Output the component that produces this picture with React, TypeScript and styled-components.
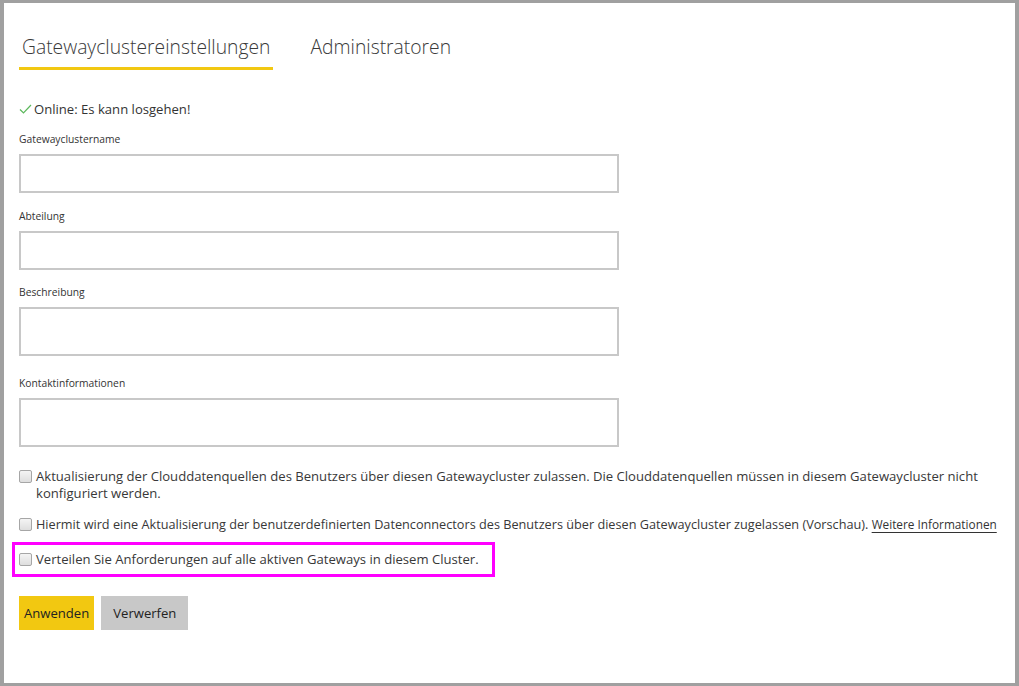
import React from 'react';
import styled, { createGlobalStyle } from 'styled-components';

const GlobalStyle = createGlobalStyle`
  html, body {
    margin: 0;
    padding: 0;
    background: #ffffff;
  }
  body {
    font-family: "Segoe UI", "Open Sans", "Liberation Sans", sans-serif;
    color: #333333;
  }
`;

const Frame = styled.div`
  box-sizing: border-box;
  width: 1019px;
  height: 686px;
  border-style: solid;
  border-color: #a0a0a0;
  border-width: 3px 4px 3px 4px;
  background: #fff;
  padding: 0 15px;
  overflow: hidden;
`;

const Tabs = styled.div`
  display: flex;
  gap: 34px;
  padding-top: 30px;
`;

const Tab = styled.div<{ $active?: boolean }>`
  font-family: "Open Sans", sans-serif;
  font-weight: 300;
  font-size: 19.3px;
  color: #3a3a3a;
  padding: 0 3px 7px 3px;
  border-bottom: 3px solid ${(p) => (p.$active ? '#f2c811' : 'transparent')};
`;

const Status = styled.div`
  display: flex;
  align-items: center;
  margin-top: 30px;
  font-size: 13.1px;
  color: #333;
  svg {
    margin-right: 2px;
  }
`;

const Field = styled.div<{ $gap?: number }>`
  display: flex;
  flex-direction: column;
  margin-top: ${(p) => p.$gap ?? 16}px;
`;

const Label = styled.label`
  font-size: 10.3px;
  color: #333;
  margin-bottom: 8px;
`;

const Input = styled.div<{ $tall?: boolean }>`
  box-sizing: border-box;
  width: 600px;
  height: ${(p) => (p.$tall ? '49px' : '39px')};
  border: 2px solid #c8c8c8;
  background: #fff;
`;

const Checks = styled.div`
  display: flex;
  flex-direction: column;
  margin-top: 21px;
`;

const CheckRow = styled.div<{ $highlight?: boolean; $compact?: boolean }>`
  display: flex;
  align-items: flex-start;
  font-size: ${(p) => (p.$compact ? '12.7px' : '13.1px')};
  line-height: 17px;
  color: #383838;
  align-self: flex-start;
  max-width: 981px;
  margin-left: ${(p) => (p.$highlight ? '-7px' : '0')};
  margin-top: ${(p) => (p.$highlight ? '-5px' : '0')};
  margin-bottom: ${(p) => (p.$highlight ? '0' : '14px')};
  padding: ${(p) => (p.$highlight ? '6px 13px 6px 4px' : '0')};
  border: ${(p) => (p.$highlight ? '3px solid #ff00ff' : 'none')};
`;

const Box = styled.span`
  flex: none;
  box-sizing: border-box;
  width: 13px;
  height: 13px;
  margin: 2px 4px 0 0;
  border: 1px solid #a6a6a6;
  border-radius: 2px;
  background: linear-gradient(#f4f4f4, #dedede);
`;

const Link = styled.a`
  font-size: 11.8px;
  color: #333;
  white-space: nowrap;
  text-decoration: underline;
  text-underline-offset: 3px;
`;

const Buttons = styled.div`
  display: flex;
  gap: 7px;
  margin-top: 19px;
`;

const Button = styled.button<{ $primary?: boolean }>`
  height: 34px;
  border: none;
  padding: 0 ${(p) => (p.$primary ? '5px' : '12px')};
  font-family: "Segoe UI", "Open Sans", sans-serif;
  font-size: 13.1px;
  color: #222;
  background: ${(p) => (p.$primary ? '#f2c811' : '#c8c8c8')};
`;

const Check = () => (
  <svg width="13" height="10" viewBox="0 0 13 10">
    <polyline points="1,5.5 4.5,9 12,1" fill="none" stroke="#5cb85c" strokeWidth="1.2" />
  </svg>
);

export default function App() {
  return (
    <>
      <GlobalStyle />
      <Frame>
        <Tabs>
          <Tab $active>Gatewayclustereinstellungen</Tab>
          <Tab>Administratoren</Tab>
        </Tabs>
        <Status>
          <Check />
          Online: Es kann losgehen!
        </Status>
        <Field $gap={14}>
          <Label>Gatewayclustername</Label>
          <Input />
        </Field>
        <Field>
          <Label>Abteilung</Label>
          <Input />
        </Field>
        <Field $gap={15}>
          <Label>Beschreibung</Label>
          <Input $tall />
        </Field>
        <Field $gap={20}>
          <Label>Kontaktinformationen</Label>
          <Input $tall />
        </Field>
        <Checks>
          <CheckRow>
            <Box />
            <span>
              Aktualisierung der Clouddatenquellen des Benutzers über diesen Gatewaycluster zulassen. Die
              Clouddatenquellen müssen in diesem Gatewaycluster nicht konfiguriert werden.
            </span>
          </CheckRow>
          <CheckRow $compact>
            <Box />
            <span>
              Hiermit wird eine Aktualisierung der benutzerdefinierten Datenconnectors des Benutzers über diesen
              Gatewaycluster zugelassen (Vorschau). <Link href="#">Weitere Informationen</Link>
            </span>
          </CheckRow>
          <CheckRow $highlight>
            <Box />
            <span>Verteilen Sie Anforderungen auf alle aktiven Gateways in diesem Cluster.</span>
          </CheckRow>
        </Checks>
        <Buttons>
          <Button $primary>Anwenden</Button>
          <Button>Verwerfen</Button>
        </Buttons>
      </Frame>
    </>
  );
}
